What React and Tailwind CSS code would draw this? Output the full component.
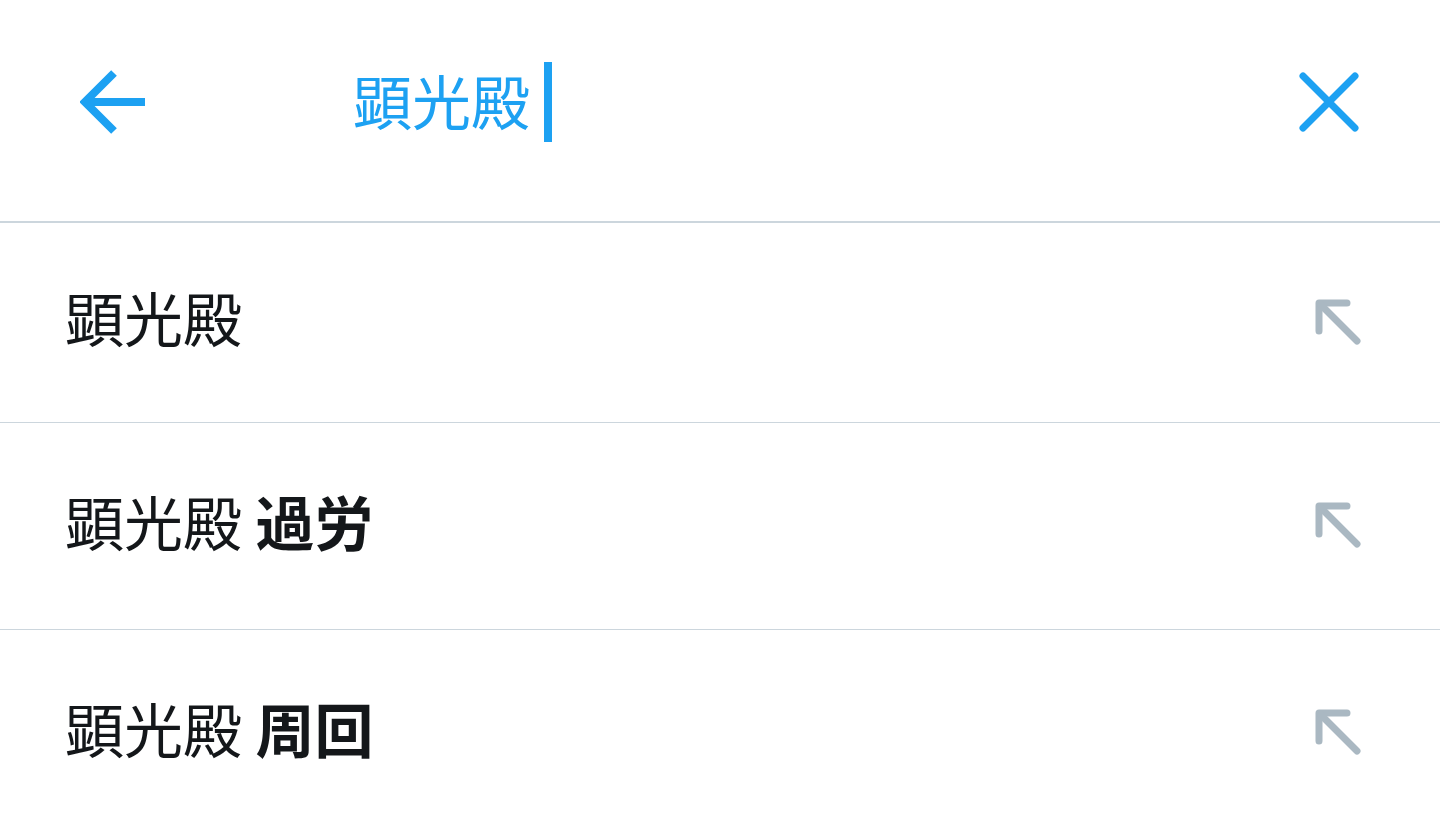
import { useState } from 'react';

const FONT = { fontFamily: '"Noto Sans CJK JP", "Noto Sans CJK SC", "Noto Sans", sans-serif' };

const suggestions = [
  { base: '顕光殿', extra: '', h: 'h-[200px]' },
  { base: '顕光殿', extra: '過労', h: 'h-[207px]' },
  { base: '顕光殿', extra: '周回', h: 'h-[207px]' },
];

function BackArrow() {
  return (
    <svg width="66" height="66" viewBox="0 0 66 66" fill="none">
      <path d="M34 4 L5 33 L34 62" stroke="#1da1f2" strokeWidth="8" strokeLinecap="butt" strokeLinejoin="miter" />
      <path d="M6 33 H65" stroke="#1da1f2" strokeWidth="8" />
    </svg>
  );
}

function CloseIcon() {
  return (
    <svg width="64" height="64" viewBox="0 0 64 64" fill="none">
      <path d="M6 6 L58 58 M58 6 L6 58" stroke="#1da1f2" strokeWidth="7" strokeLinecap="round" />
    </svg>
  );
}

function FillArrow() {
  return (
    <svg width="50" height="50" viewBox="0 0 50 50" fill="none">
      <path d="M5 33 V5 H33" stroke="#aab8c2" strokeWidth="7" strokeLinecap="round" strokeLinejoin="round" />
      <path d="M7 7 L43 43" stroke="#aab8c2" strokeWidth="7" strokeLinecap="round" />
    </svg>
  );
}

export default function App() {
  const [query] = useState('顕光殿');

  return (
    <div className="w-[1440px] h-[819px] bg-white overflow-hidden" style={FONT}>
      {/* search header */}
      <div className="h-[223px] flex items-start pt-[62px] border-b-2 border-[#ccd6dd]">
        <div className="w-[80px] shrink-0" />
        <div className="h-[80px] flex items-center">
          <BackArrow />
        </div>
        <div className="flex-1 flex items-center h-[80px] pl-[207px]">
          <span className="text-[59px] leading-none text-[#1da1f2] mb-[6px]">{query}</span>
          <span className="ml-[14px] w-[8px] h-[80px] bg-[#1da1f2]" />
        </div>
        <div className="h-[80px] flex items-center pr-[79px]">
          <CloseIcon />
        </div>
      </div>

      {/* suggestions */}
      {suggestions.map((s, i) => (
        <div key={i} className={`${s.h} flex items-center justify-between pl-[65px] pr-[76px] border-b border-[#ccd6dd]`}>
          <span className="text-[59px] leading-none text-[#14171a] mb-[12px]">
            {s.base}
            {s.extra && <b className="font-bold"> {s.extra}</b>}
          </span>
          <FillArrow />
        </div>
      ))}
    </div>
  );
}
